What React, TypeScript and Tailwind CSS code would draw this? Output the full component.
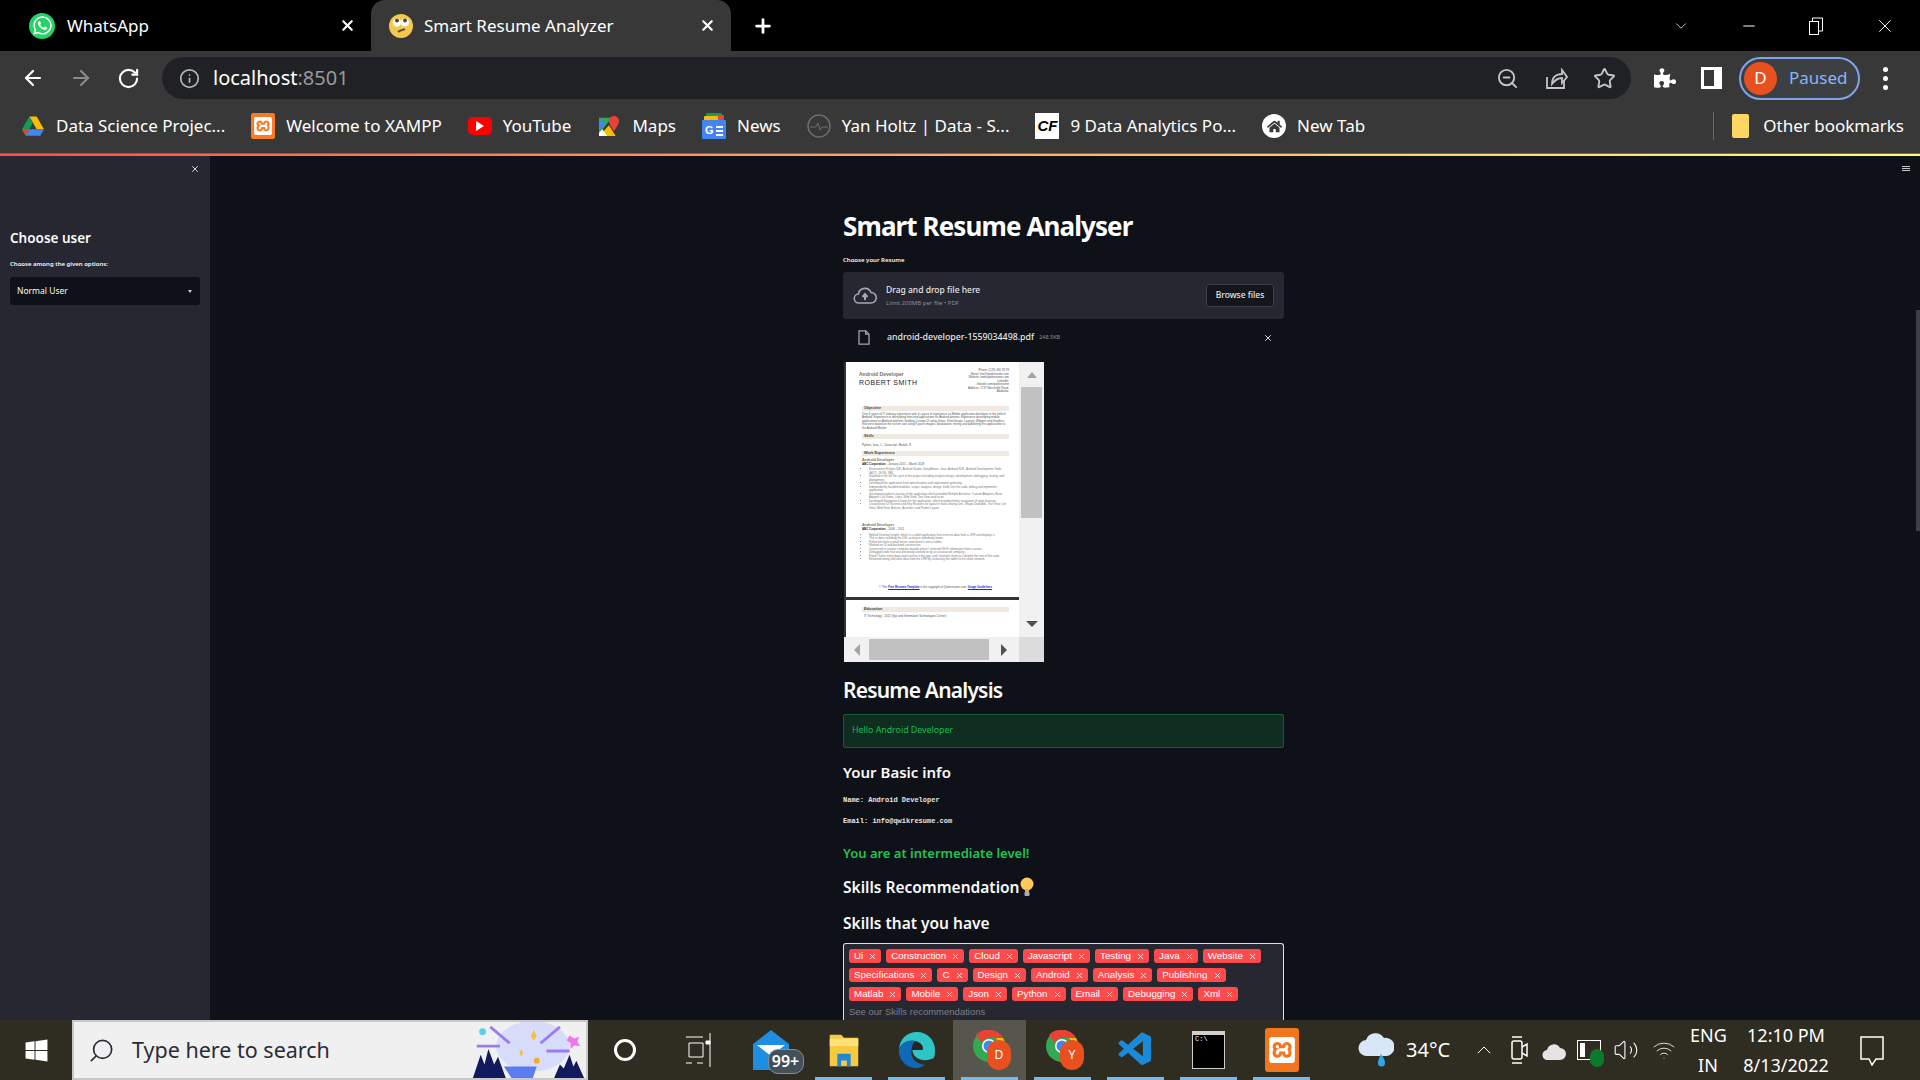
import React from 'react';
import { ArrowLeft, ArrowRight, RotateCw, Info, ZoomOut, Star, X, Plus, ChevronDown, Minus, ChevronUp, Volume2, Wifi, Search } from 'lucide-react';
import { FaWhatsapp, FaWindows, FaPuzzlePiece, FaHome } from 'react-icons/fa';
import { SiXampp } from 'react-icons/si';
import { VscVscode } from 'react-icons/vsc';

const SKILLS = [
  ['Ui', 'Construction', 'Cloud', 'Javascript', 'Testing', 'Java', 'Website'],
  ['Specifications', 'C', 'Design', 'Android', 'Analysis', 'Publishing'],
  ['Matlab', 'Mobile', 'Json', 'Python', 'Email', 'Debugging', 'Xml'],
];

const Drive = () => (
  <svg viewBox="0 0 24 22" className="w-[22px] h-[21px]">
    <path d="M8 0h8l8 14h-8z" fill="#fbbc04" />
    <path d="M8 0 0 14l4 7 8-14z" fill="#0f9d58" />
    <path d="M4 21h16l4-7H8z" fill="#4285f4" />
    <path d="M4 21l4-7H0z" fill="#ea4335" />
  </svg>
);

const Maps = () => (
  <svg viewBox="0 0 24 24" className="w-[20px] h-[22px]">
    <path d="M0 2h15L0 22z" fill="#34a853" />
    <path d="M0 24 12 11l8 13z" fill="#fbbc04" />
    <path d="M0 24V20L4 16l6 8z" fill="#fff" />
    <path d="M0 2l8 7-8 8z" fill="#4285f4" />
    <path d="M18 0a6 6 0 0 0-6 6c0 4 6 12 6 12s6-8 6-12a6 6 0 0 0-6-6z" fill="#ea4335" />
  </svg>
);

const News = () => (
  <svg viewBox="0 0 24 26" className="w-[24px] h-[26px]">
    <rect x="4" y="0" width="16" height="8" rx="1" fill="#0f9d58" />
    <rect x="10" y="2" width="12" height="8" rx="1" fill="#ea4335" />
    <rect x="2" y="3" width="14" height="8" rx="1" fill="#fbbc04" />
    <rect x="0" y="7" width="24" height="19" rx="1" fill="#4285f4" />
    <text x="3" y="21" fontSize="11" fontWeight="700" fontFamily="Liberation Sans" fill="#fff">G</text>
    <rect x="14" y="13" width="7" height="2" fill="#fff" />
    <rect x="14" y="17" width="7" height="2" fill="#fff" />
    <rect x="14" y="21" width="7" height="2" fill="#fff" />
  </svg>
);

const ChromeLogo = ({ letter }: { letter: string }) => (
  <div className="relative w-[38px] h-[40px] ml-[5px]">
    <svg viewBox="0 0 32 32" className="w-[32px] h-[32px]">
      <circle cx="16" cy="16" r="16" fill="#34a853" />
      <path d="M16 0a16 16 0 0 1 14 8H16a8 8 0 0 0-7.500 5L3 5a16 16 0 0 1 13-5z" fill="#ea4335" />
      <path d="M30 8a16 16 0 0 1-14 24l7-12a8 8 0 0 0 0-12z" fill="#fbbc04" />
      <circle cx="16" cy="16" r="7" fill="#fff" />
      <circle cx="16" cy="16" r="5.500" fill="#4285f4" />
    </svg>
    <div className="absolute right-0 bottom-0 w-[24px] h-[30px] rounded-full bg-[#e8511f] text-white text-[12px] flex items-center justify-center">{letter}</div>
  </div>
);

const Edge = () => (
  <svg viewBox="0 0 32 32" className="w-[36px] h-[40px]">
    <path d="M16 0C7 0 1 6 0 15c3-6 9-8 14-7 6 1 8 5 7 8h-9c0 6 6 9 11 9 3 0 6-1 8-2 1-3 1-5 1-7C32 7 25 0 16 0z" fill="#2fc4c8" />
    <path d="M0 15c-1 9 6 17 15 17 3 0 6-1 8-3-6 0-12-4-12-11 0-4 1-7 3-10C8 7 3 9 0 15z" fill="#1068b8" />
    <path d="M12 16h9c1-3-1-7-7-8-2 2-2 5-2 8z" fill="#0e1117" opacity="0.2" />
  </svg>
);

const CloudWeather = () => (
  <svg viewBox="0 0 36 40" className="w-[36px] h-[40px]">
    <path d="M9 26a8 8 0 0 1-1-16 10 10 0 0 1 18-2 9 9 0 0 1 3 18z" fill="#d8e7f5" />
    <path d="M23 24c3 4 4 7 4 9a3.500 3.500 0 0 1-7 0c0-2 1-5 3-9z" fill="#2ea7e8" />
  </svg>
);

const Bookmark = ({ icon, label }: { icon: React.ReactNode; label: string }) => (
  <div className="flex items-center gap-[11px] shrink-0">
    <div className="w-[24px] flex justify-center">{icon}</div>
    <span className="text-[17px] text-white whitespace-nowrap">{label}</span>
  </div>
);

const TabBar = () => (
  <div className="h-[51px] bg-black flex items-stretch text-white shrink-0">
    <div className="w-[371px] flex items-center pl-[29px] pr-[15px]">
      <div className="w-[26px] h-[26px] rounded-full bg-[#25d366] flex items-center justify-center">
        <FaWhatsapp className="w-[21px] h-[21px] text-white" />
      </div>
      <span className="ml-[12px] text-[17px] flex-1">WhatsApp</span>
      <X className="w-[17px] h-[17px]" strokeWidth={3} />
    </div>
    <div className="w-[360px] bg-[#383838] rounded-t-[14px] flex items-center pl-[18px] pr-[15px]">
      <svg viewBox="0 0 24 24" className="w-[24px] h-[24px]">
        <circle cx="12" cy="12" r="12" fill="#f4c84f" />
        <circle cx="8" cy="8.500" r="4" fill="#fff" />
        <circle cx="16" cy="8.500" r="4" fill="#fff" />
        <circle cx="8" cy="6.500" r="2" fill="#5a4a2a" />
        <circle cx="16" cy="6.500" r="2" fill="#5a4a2a" />
        <path d="M9 18c2-2 5-2 7-3" stroke="#5a4a2a" strokeWidth="1.800" fill="none" />
      </svg>
      <span className="ml-[11px] text-[17px] flex-1">Smart Resume Analyzer</span>
      <X className="w-[17px] h-[17px]" strokeWidth={3} />
    </div>
    <div className="flex items-center ml-[21px] flex-1">
      <Plus className="w-[22px] h-[22px]" strokeWidth={3} />
      <div className="ml-auto flex items-center pr-[24px] gap-[50px]">
        <ChevronDown className="w-[18px] h-[18px]" strokeWidth={1} />
        <Minus className="w-[18px] h-[18px]" strokeWidth={1.500} />
        <svg viewBox="0 0 16 18" className="w-[16px] h-[18px] fill-none stroke-white">
          <rect x="1.500" y="4.500" width="9" height="13" />
          <path d="M4.500 4V1H14.500V14H11" />
        </svg>
        <X className="w-[22px] h-[22px]" strokeWidth={1} />
      </div>
    </div>
  </div>
);

const Toolbar = () => (
  <div className="h-[54px] bg-[#383838] flex items-center shrink-0">
    <div className="w-[162px] flex items-center pl-[21px] gap-[24px] text-white">
      <ArrowLeft className="w-[24px] h-[24px]" strokeWidth={2.200} />
      <ArrowRight className="w-[24px] h-[24px] text-[#8a8a8a]" strokeWidth={2.200} />
      <RotateCw className="w-[23px] h-[23px]" strokeWidth={2.200} />
    </div>
    <div className="w-[1469px] h-[42px] rounded-full bg-[#202124] flex items-center pl-[17px] pr-[15px]">
      <Info className="w-[21px] h-[21px] text-[#b4b4b4]" />
      <span className="ml-[13px] text-[20px] text-white">localhost<span className="text-[#9a9a9a]">:8501</span></span>
      <div className="ml-auto flex items-center gap-[25px] text-[#c4c4c4]">
        <ZoomOut className="w-[23px] h-[23px]" />
        <svg viewBox="0 0 24 24" className="w-[24px] h-[24px] fill-none stroke-[#c4c4c4]" strokeWidth="1.800">
          <path d="M3 11v11h17v-7" />
          <path d="M8 18c0-7 4-10 10-10V4l5 7-5 6v-5c-4 0-7 2-10 6z" />
        </svg>
        <Star className="w-[23px] h-[23px]" strokeWidth={2} />
      </div>
    </div>
    <div className="flex-1 flex items-center pl-[23px] text-white">
      <FaPuzzlePiece className="w-[22px] h-[22px]" />
      <div className="ml-[25px] w-[21px] h-[22px] border-[3px] border-white border-r-[8px]" />
      <div className="ml-[17px] w-[121px] h-[43px] rounded-full bg-[#3c4043] border-2 border-[#7fa5e8] flex items-center pl-[3px]">
        <div className="w-[33px] h-[33px] rounded-full bg-[#e8511f] flex items-center justify-center text-[17px]">D</div>
        <span className="ml-[12px] text-[17px] text-[#8ab4f8]">Paused</span>
      </div>
      <div className="ml-[23px] flex flex-col gap-[4px]">
        <span className="w-[5px] h-[5px] rounded-full bg-white" />
        <span className="w-[5px] h-[5px] rounded-full bg-white" />
        <span className="w-[5px] h-[5px] rounded-full bg-white" />
      </div>
    </div>
  </div>
);

const BookmarksBar = () => (
  <div className="h-[48px] bg-[#383838] flex items-center pl-[21px] pr-[16px] pb-[6px] gap-[26px] shrink-0">
    <Bookmark icon={<Drive />} label="Data Science Projec..." />
    <Bookmark icon={<div className="w-[24px] h-[26px] bg-[#fb7a24] rounded-[2px] flex items-center justify-center"><SiXampp className="w-[18px] h-[18px] text-white" /></div>} label="Welcome to XAMPP" />
    <Bookmark icon={<div className="w-[24px] h-[18px] bg-[#f00] rounded-[5px] flex items-center justify-center"><div className="w-0 h-0 border-y-[5px] border-y-transparent border-l-[8px] border-l-white" /></div>} label="YouTube" />
    <Bookmark icon={<Maps />} label="Maps" />
    <Bookmark icon={<News />} label="News" />
    <Bookmark icon={<svg viewBox="0 0 24 24" className="w-[24px] h-[24px] fill-none stroke-[#6d6d6d]"><circle cx="12" cy="12" r="11" strokeWidth="1.500" /><path d="M3 13h6l2-4 2 7 2-3h6" /></svg>} label="Yan Holtz | Data - S..." />
    <Bookmark icon={<div className="w-[24px] h-[26px] bg-white text-black italic font-black text-[15px] leading-[26px] text-center font-['Liberation_Sans']">CF</div>} label="9 Data Analytics Po..." />
    <Bookmark icon={<div className="w-[24px] h-[24px] bg-white rounded-full flex items-center justify-center"><FaHome className="w-[15px] h-[15px] text-[#383838]" /></div>} label="New Tab" />
    <div className="ml-auto h-[28px] w-px bg-[#6a6a6a]" />
    <div className="flex items-center gap-[14px] ml-[-8px]">
      <div className="w-[17px] h-[24px] bg-[#fdd663] rounded-[2px]" />
      <span className="text-[17px] text-white">Other bookmarks</span>
    </div>
  </div>
);

const ResumeBand = ({ children }: { children: React.ReactNode }) => (
  <div className="bg-[#efe9e1] h-[5px] px-[2px] text-[3.800px] leading-[5px] font-bold text-[#444]">{children}</div>
);

const ResumeDoc = () => (
  <div className="flex-1 min-w-0 overflow-hidden bg-[#333] pl-[2px] font-['Liberation_Sans'] text-[2.900px] leading-[3.500px] text-[#555]">
    <div className="bg-white h-[235px] pt-[7px] pl-[16px] pr-[10px] overflow-hidden">
      <div className="flex justify-between">
        <div className="pt-[2px] -ml-[3px]">
          <div className="text-[5px] leading-[6px] font-bold text-[#7d6e5b]">Android Developer</div>
          <div className="text-[7px] leading-[9px] tracking-[0.5px] text-[#222] mt-[1px]">ROBERT SMITH</div>
        </div>
        <div className="w-[50px] text-right text-[#555]">Phone: (123) 456 78 99<br />Email: info@qwikresume.com<br />Website: www.qwikresume.com<br />LinkedIn:<br />linkedin.com/qwikresume<br />Address: 1737 Marshville Road,<br />Alabama.</div>
      </div>
      <div className="mt-[12px]"><ResumeBand>Objective</ResumeBand></div>
      <p className="mt-[2px]">Over 6 years of IT industry experience with 4+ years of experience as Mobile application developer in the field of Android. Experience in developing front-end applications for Android phones. Experience developing mobile applications on Android platform, building Custom UI using Views, ViewGroups, Layouts, Widgets and Graphics that were based on the screen size using 9-patch images. Idealization, testing and publishing the applications to the Android Market.</p>
      <div className="mt-[4px]"><ResumeBand>Skills</ResumeBand></div>
      <p className="mt-[5px]">Python, Java, C, Javascript, Matlab, R.</p>
      <div className="mt-[3px]"><ResumeBand>Work Experience</ResumeBand></div>
      <div className="mt-[2px] text-[3.600px] leading-[5px] font-bold text-[#7d6e5b]">Android Developer</div>
      <p><b className="text-[#222]">ABC Corporation</b> - January 2015 – March 2018</p>
      <ul className="list-disc pl-[7px] mt-[2px] text-[#777]">
        <li>Environment Eclipse IDE, Android Studio, GenyMotion, Java, Android SDK, Android Development Tools (ADT), JSON, XML.</li>
        <li>Involved in the full life cycle of the project including analysis design, development, debugging, testing, and deployment.</li>
        <li>Developed the application from specifications and requirement gathering.</li>
        <li>Independently handled modules, scope, analysis, design, build, test the code, debug and implement application.</li>
        <li>Developed products section of the application which provided Multiple Activities, Custom Adapters, Base Adapter, List Views, Links, Web View, Text View and so on.</li>
        <li>Developed Navigation Drawer for the application, which provides better navigation of apps features.</li>
        <li>Created new UI Screens and Key Reasons for layout in work utilizing Unit, Shape Drawable, Text View, List View, Web View, Buttons, Activities, and Frame Layout.</li>
      </ul>
      <div className="mt-[13px] text-[3.600px] leading-[5px] font-bold text-[#7d6e5b]">Android Developer</div>
      <p><b className="text-[#222]">ABC Corporation</b> - 2008 – 2011</p>
      <ul className="list-disc pl-[7px] mt-[2px] text-[#777]">
        <li>Helped Develop Insight, which is a tablet application that retrieves data from a CPE and displays it.</li>
        <li>This is done to debug the DSL activity in somebody home.</li>
        <li>Pulled info from a small server and stored it onto a tablet.</li>
        <li>Worked on UI and backend construction.</li>
        <li>Connected to various computer boards where I retrieved Wi-Fi information from a server.</li>
        <li>Debugged code that was previously worked on by an outsourced company.</li>
        <li>Fixed / Solve many bugs and crashes in the app, and I maintain them as I despite the size of the code.</li>
        <li>Retrieved wiring and raise data from the CPE by contacting the tablet to the same network.</li>
      </ul>
      <p className="mt-[24px] text-center">© This <span className="text-[#2222dd] underline font-bold">Free Resume Template</span> is the copyright of Qwikresume.com. <span className="text-[#2222dd] underline font-bold">Usage Guidelines</span></p>
    </div>
    <div className="h-[3px]" />
    <div className="bg-white h-[40px] pl-[16px] pr-[10px] pt-[7px]">
      <ResumeBand>Education</ResumeBand>
      <p className="mt-[3px] pl-[2px]">IT Technology - 2011 (Sys and Information Technologies Center)</p>
    </div>
  </div>
);

const ResumeViewer = () => (
  <div className="w-[200px] h-[300px] mt-[7px] flex flex-col bg-[#f1f1f1] ml-px">
    <div className="flex flex-1 min-h-0">
      <ResumeDoc />
      <div className="w-[25px] flex flex-col items-center bg-[#f1f1f1]">
        <div className="h-[25px] flex items-center justify-center"><div className="w-0 h-0 border-x-[5px] border-x-transparent border-b-[6px] border-b-[#a3a3a3]" /></div>
        <div className="w-[21px] h-[131px] bg-[#c1c1c1]" />
        <div className="flex-1 flex items-end pb-[10px]"><div className="w-0 h-0 border-x-[6px] border-x-transparent border-t-[6px] border-t-[#505050]" /></div>
      </div>
    </div>
    <div className="h-[25px] flex items-center shrink-0">
      <div className="w-[25px] flex justify-center"><div className="w-0 h-0 border-y-[6px] border-y-transparent border-r-[6px] border-r-[#a3a3a3]" /></div>
      <div className="w-[120px] h-[21px] bg-[#c1c1c1]" />
      <div className="w-[30px] flex justify-center"><div className="w-0 h-0 border-y-[6px] border-y-transparent border-l-[6px] border-l-[#505050]" /></div>
      <div className="flex-1 h-full bg-[#dcdcdc]" />
    </div>
  </div>
);

const Sidebar = () => (
  <div className="w-[210px] bg-[#262730] shrink-0 relative px-[10px] pt-[72px] text-[#fafafa]">
    <X className="absolute top-[8px] right-[10px] w-[10px] h-[10px]" strokeWidth={2} />
    <div className="text-[13.500px] leading-[20px] font-semibold">Choose user</div>
    <div className="mt-[11px] text-[6px] leading-[10px] font-semibold">Choose among the given options:</div>
    <div className="mt-[8px] h-[28px] bg-[#0e1117] rounded-[3px] flex items-center justify-between pl-[7px] pr-[8px]">
      <span className="text-[8.500px]">Normal User</span>
      <div className="w-0 h-0 border-x-[2.500px] border-x-transparent border-t-[3px] border-t-[#d0d0d0]" />
    </div>
  </div>
);

const Uploader = () => (
  <>
    <div className="mt-[7px] w-[441px] h-[47px] bg-[#262730] rounded-[3px] flex items-center pl-[10px] pr-[10px]">
      <svg viewBox="0 0 24 24" className="w-[24px] h-[24px] fill-none stroke-[#a3a8b8]" strokeWidth="1.600">
        <path d="M6 19a4.500 4.500 0 0 1-.5-9A6.500 6.500 0 0 1 18 8.500 5 5 0 0 1 18 19z" />
        <path d="M12 16v-5M9.500 13l2.500-3 2.500 3" strokeWidth="2" />
      </svg>
      <div className="ml-[9px] flex-1">
        <div className="text-[8.500px] leading-[12px] font-medium text-[#e6e6e6]">Drag and drop file here</div>
        <div className="mt-[3px] text-[6px] leading-[8px] text-[#8c8f99]">Limit 200MB per file • PDF</div>
      </div>
      <div className="w-[68px] h-[23px] bg-[#14161e] border border-[#3d3f49] rounded-[3px] flex items-center justify-center text-[8.500px] font-medium text-[#e6e6e6]">Browse files</div>
    </div>
    <div className="w-[441px] h-[35px] flex items-center pl-[15px] pr-[11px] mt-px">
      <svg viewBox="0 0 14 18" className="w-[12px] h-[15px] fill-none stroke-[#a3a8b8]" strokeWidth="1.500"><path d="M1 1h8l4 4v12H1z" /><path d="M9 1v4h4" /></svg>
      <span className="ml-[17px] text-[8.800px] font-medium text-[#e6e6e6]">android-developer-1559034498.pdf</span>
      <span className="ml-[5px] text-[5.500px] text-[#8c8f99]">248.5KB</span>
      <X className="ml-auto w-[10px] h-[10px] text-white" strokeWidth={2} />
    </div>
  </>
);

const SkillTags = () => (
  <div className="mt-[10px] w-[441px] h-[90px] bg-[#262730] border border-b-0 border-[#e0e0e0] rounded-t-[3px] pl-[5px] pt-[5px]">
    {SKILLS.map((row, i) => (
      <div key={i} className="flex gap-[5px] mb-[5px]">
        {row.map(skill => (
          <div key={skill} className="h-[14px] bg-[#ff4b4b] rounded-[3px] pl-[5px] pr-[4px] flex items-center gap-[5px] text-[9.800px] text-white font-['Liberation_Sans']">
            {skill}
            <X className="w-[9px] h-[9px]" strokeWidth={2} />
          </div>
        ))}
      </div>
    ))}
    <div className="mt-[3px] text-[9.500px] leading-[12px] text-[#7d7e86] font-['Liberation_Sans']">See our Skills recommendations</div>
  </div>
);

const Content = () => (
  <div className="flex-1 relative overflow-hidden">
    <div className="w-[443px] ml-[633px] pt-[52px] text-[#fafafa]">
      <h1 className="text-[26px] leading-[36px] font-bold tracking-[-0.9px] text-white">Smart Resume Analyser</h1>
      <div className="mt-[11px] text-[6px] leading-[10px] font-semibold">Choose your Resume</div>
      <Uploader />
      <ResumeViewer />
      <h2 className="mt-[13px] text-[21px] leading-[30px] font-semibold tracking-[-0.8px]">Resume Analysis</h2>
      <div className="mt-[9px] w-[441px] h-[34px] bg-[#0f2e1f] border border-[#155c31] rounded-[2px] flex items-center pl-[8px] text-[8.800px] text-[#1fb955]">Hello Android Developer</div>
      <div className="mt-[14px] text-[15px] leading-[20px] font-semibold">Your Basic info</div>
      <div className="mt-[13px] font-['Liberation_Mono'] text-[7px] leading-[10px] font-bold text-[#e6e6e6]">Name: Android Developer</div>
      <div className="mt-[11px] font-['Liberation_Mono'] text-[7px] leading-[10px] font-bold text-[#e6e6e6]">Email: info@qwikresume.com</div>
      <div className="mt-[17px] text-[13px] leading-[20px] font-semibold text-[#21c354]">You are at intermediate level!</div>
      <div className="mt-[14px] flex items-center text-[15.500px] leading-[20px] font-semibold">
        Skills Recommendation
        <svg viewBox="0 0 14 20" className="w-[14px] h-[20px] ml-px">
          <circle cx="7" cy="7" r="6.500" fill="#ffc95c" />
          <path d="M5 12h4v3H5z" fill="#f5a623" />
          <rect x="4.500" y="15" width="5" height="4" rx="1" fill="#aab0b5" />
        </svg>
      </div>
      <div className="mt-[16px] text-[15.500px] leading-[20px] font-semibold">Skills that you have</div>
      <SkillTags />
    </div>
    <div className="absolute top-[10px] right-[10px] flex flex-col gap-px">
      <span className="w-[8px] h-px bg-[#c8c8c8]" />
      <span className="w-[8px] h-px bg-[#c8c8c8]" />
      <span className="w-[8px] h-px bg-[#c8c8c8]" />
    </div>
    <div className="absolute right-0 top-[154px] w-[4px] h-[221px] bg-[#3d3f47]" />
  </div>
);

const TaskIcon = ({ children, active, underline = true }: { children: React.ReactNode; active?: boolean; underline?: boolean }) => (
  <div className={`relative w-[73px] flex items-center justify-center ${active ? 'bg-[#57564c]' : ''}`}>
    {children}
    {underline && <div className="absolute bottom-0 inset-x-[8px] h-[3px] bg-[#76b9ed]" />}
  </div>
);

const Taskbar = () => (
  <div className="h-[60px] bg-[#2f2c22] flex items-stretch text-white shrink-0">
    <div className="w-[72px] flex items-center justify-center">
      <FaWindows className="w-[25px] h-[25px]" />
    </div>
    <div className="w-[516px] bg-[#f0f0f0] border-2 border-[#c8c8c8] flex items-center pl-[14px] overflow-hidden relative text-[#2b2b35]">
      <Search className="w-[27px] h-[27px] -scale-x-100" strokeWidth={1.500} />
      <span className="ml-[17px] text-[21.500px] leading-none">Type here to search</span>
      <svg viewBox="0 0 115 60" className="absolute right-0 top-0 w-[115px] h-[58px]">
        <ellipse cx="62" cy="25" rx="38" ry="26" fill="#d8dcfb" />
        <path d="M0 58 8 34l4 10 4-16 6 16 4-8 8 22h50l6-14 4 4 6-14 4 12 3-6 8 18z" fill="#12195c" />
        <path d="M32 46h34l-4 12H40z" fill="#5a7cf0" />
        <path d="M18 5l20 17M90 5 70 22M4 25h24M100 30H76" stroke="#9b7bf0" strokeWidth="3" />
        <circle cx="10" cy="10" r="3.500" fill="#58d0ea" />
        <path d="M63 8l3 6-3 6-3-6zM50 28l2 4-2 4-2-4z" fill="#f5c242" />
        <path d="M100 14l5 3 5-2-2 5 3 5-6-1-4 4 0-6-4-3z" fill="#ee77ee" />
        <circle cx="66" cy="40" r="3" fill="#f9a825" />
      </svg>
    </div>
    <TaskIcon underline={false}><div className="w-[22px] h-[22px] rounded-full border-[3px] border-white" /></TaskIcon>
    <TaskIcon underline={false}>
      <svg viewBox="0 0 26 36" className="w-[26px] h-[36px] fill-none stroke-white"><path d="M1 5h17M4 11h14v14H4zM1 31h6M12 31h6M25 1v34" /><path d="M21 9h4v3h-4z" fill="#fff" /></svg>
    </TaskIcon>
    <TaskIcon underline={false}>
      <div className="relative">
        <svg viewBox="0 0 36 40" className="w-[36px] h-[40px]">
          <path d="M18 0 36 14v26H0V14z" fill="#1e8fe0" />
          <path d="M4 15h28L18 26z" fill="#fff" />
        </svg>
        <div className="absolute -right-[15px] -bottom-[4px] w-[36px] h-[25px] rounded-[10px] bg-[#43505c] border border-[#8c8c8c] text-[16px] leading-[22px] text-center font-semibold">99+</div>
      </div>
    </TaskIcon>
    <TaskIcon>
      <svg viewBox="0 0 32 40" className="w-[32px] h-[38px]">
        <path d="M1 4h12l3 3h15v30H1z" fill="#f8c93f" />
        <path d="M1 8h30v8H1z" fill="#ffe07a" />
        <path d="M9 24h14v13h-4v-6h-6v6H9z" fill="#1e88d8" />
      </svg>
    </TaskIcon>
    <TaskIcon><Edge /></TaskIcon>
    <TaskIcon active><ChromeLogo letter="D" /></TaskIcon>
    <TaskIcon><ChromeLogo letter="Y" /></TaskIcon>
    <TaskIcon><VscVscode className="w-[40px] h-[40px] text-[#1b8ad8]" /></TaskIcon>
    <TaskIcon>
      <div className="w-[33px] h-[38px] bg-[#cfcfcf] pt-[4px] px-[1px] pb-[1px]">
        <div className="w-full h-full bg-black text-[7px] leading-[9px] pl-[2px] font-['Liberation_Mono']">C:\</div>
      </div>
    </TaskIcon>
    <TaskIcon>
      <div className="w-[34px] h-[44px] rounded-[3px] bg-[#f2761d] flex items-center justify-center"><SiXampp className="w-[26px] h-[26px] text-white" /></div>
    </TaskIcon>
    <div className="flex-1 flex items-center pl-[40px] pr-[36px]">
      <CloudWeather />
      <span className="ml-[12px] text-[20px] w-[46px]">34°C</span>
      <ChevronUp className="ml-[20px] w-[24px] h-[24px]" strokeWidth={1} />
      <svg viewBox="0 0 18 32" className="ml-[14px] w-[18px] h-[32px] fill-none stroke-white" strokeWidth="1.500"><rect x="2" y="7" width="10" height="18" rx="2" /><path d="M12 13l5-3v12l-5-3" /><path d="M2 3h10M2 29h10" /></svg>
      <svg viewBox="0 0 24 20" className="ml-[14px] w-[24px] h-[20px]"><path d="M6 20a5 5 0 0 1-1-10 7 7 0 0 1 13-2 6 6 0 0 1 0 12z" fill="#e4e4e4" /></svg>
      <div className="ml-[11px] relative w-[24px] h-[20px] border border-white flex items-center pl-[2px]">
        <div className="w-[5px] h-[14px] bg-white" />
        <div className="absolute -right-[4px] -bottom-[8px] w-[14px] h-[18px] rounded-full bg-[#0b7a2c]" />
      </div>
      <Volume2 className="ml-[12px] w-[26px] h-[26px] text-white" strokeWidth={1} />
      <Wifi className="ml-[13px] w-[24px] h-[24px] text-[#d8d8d8]" strokeWidth={1} />
      <div className="ml-[14px] w-[36px] text-center text-[18px] leading-[30px]">ENG<br />IN</div>
      <div className="ml-[16px] w-[88px] text-center text-[18px] leading-[30px]">12:10 PM<br />8/13/2022</div>
      <div className="ml-auto relative w-[24px] h-[28px]">
        <svg viewBox="0 0 24 30" className="w-[24px] h-[30px] fill-none stroke-white" strokeWidth="1.500"><path d="M1 1h22v22h-7l-4 6-3-6H1z" /></svg>
      </div>
    </div>
  </div>
);

export default function App() {
  return (
    <div className="w-[1920px] h-[1080px] overflow-hidden flex flex-col bg-[#0e1117] font-['Noto_Sans',sans-serif]">
      <TabBar />
      <Toolbar />
      <BookmarksBar />
      <div className="h-[3px] shrink-0 flex flex-col">
        <div className="h-[1px] bg-[#6a6a6a]" />
        <div className="h-[2px] bg-gradient-to-r from-[#ff4b4b] to-[#fffd80]" />
      </div>
      <div className="flex-1 min-h-0 flex">
        <Sidebar />
        <Content />
      </div>
      <Taskbar />
    </div>
  );
}
